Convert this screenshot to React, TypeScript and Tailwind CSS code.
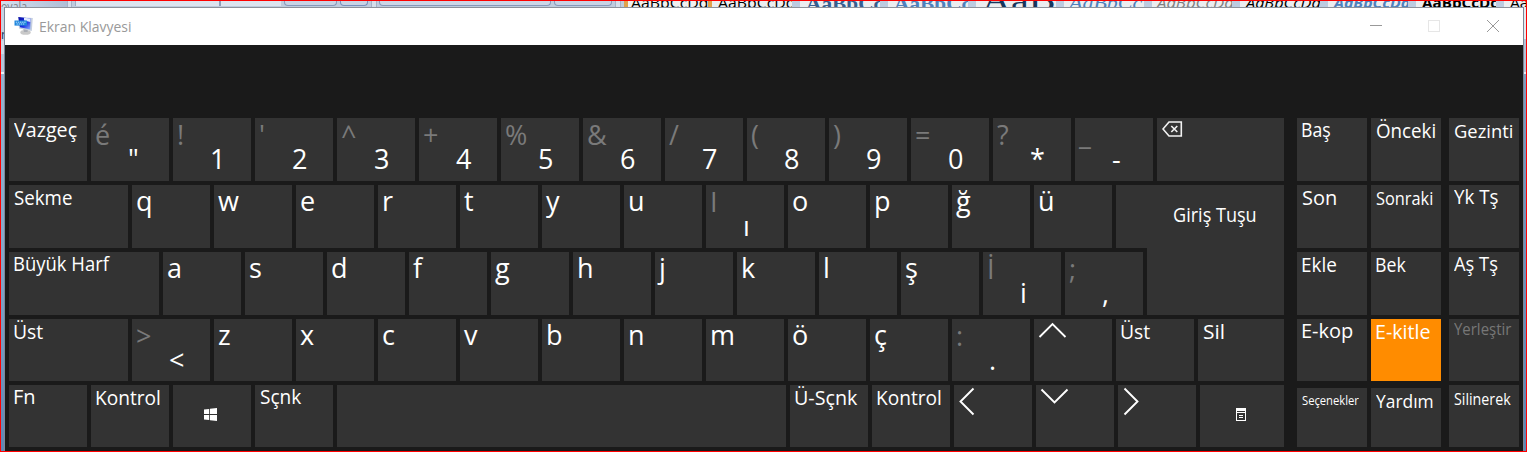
import { useLayoutEffect, useRef, useState } from "react";
import type { ReactNode } from "react";

/* Text squeezed or stretched horizontally so that it takes up a given width. */
function Fit({ text, width, className = "" }: { text: string; width: number; className?: string }) {
  const ref = useRef<HTMLSpanElement>(null);
  const [scale, setScale] = useState(1);
  useLayoutEffect(() => {
    if (ref.current) setScale(width / ref.current.offsetWidth);
  }, [text, width]);
  return (
    <span
      ref={ref}
      className={`block w-max origin-left whitespace-pre leading-none ${className}`}
      style={{ transform: `scaleX(${scale})` }}
    >
      {text}
    </span>
  );
}

function Key({ size = "w-[78px]", tone = "bg-[#333333]", children }: { size?: string; tone?: string; children?: ReactNode }) {
  return <div className={`flex shrink-0 flex-col items-start ${size} ${tone}`}>{children}</div>;
}

type LabelKeyProps = { text: string; width: number; size?: string; tone?: string; label?: string };

function LabelKey({ text, width, size, tone, label = "mt-[3px] ml-[5px] text-[20px]" }: LabelKeyProps) {
  return (
    <Key size={size} tone={tone}>
      <Fit text={text} width={width} className={label} />
    </Key>
  );
}

function LetterKey({ char }: { char: string }) {
  return (
    <Key>
      <span className="ml-[4px] mt-[2px] block text-[27px] leading-none">{char}</span>
    </Key>
  );
}

function DualKey({ shift, main }: { shift: string; main: string }) {
  return (
    <Key>
      <span className="ml-[4px] mt-[3px] block text-[27px] leading-none text-[#7a7a7a]">{shift}</span>
      <span className="-mt-[3px] ml-[37px] block text-[27px] leading-none">{main}</span>
    </Key>
  );
}

function ArrowKey({ points }: { points: string }) {
  return (
    <Key>
      <svg className="block" width="78" height="62" fill="none" stroke="#fff" strokeWidth="1.9">
        <polyline points={points} />
      </svg>
    </Key>
  );
}

function BackspaceIcon() {
  return (
    <svg className="ml-[5px] mt-[3px] block" width="21" height="17" fill="none" stroke="#f2f2f2" strokeWidth="1.6">
      <path d="M7 1H19.3V15H7L1 8Z" />
      <path d="M9.3 5L15.3 11M15.3 5L9.3 11" />
    </svg>
  );
}

function WindowsIcon() {
  return (
    <svg className="ml-[31px] mt-[23px] block" width="13" height="13" fill="#fff">
      <path d="M0 1.6L5.2 1V6H0ZM6 0.8L13 0V6H6ZM0 7H5.2V12L0 11.4ZM6 7H13V13L6 12.2Z" />
    </svg>
  );
}

function MenuIcon() {
  return (
    <svg className="ml-[36px] mt-[23px] block" width="10" height="13" fill="#fff" shapeRendering="crispEdges">
      <path fillRule="evenodd" d="M0 0H10V13H0ZM1 3V4H9V3ZM1 5V12H9V5Z" />
      <path d="M3 7H7V8H3ZM3 9H7V10H3Z" />
    </svg>
  );
}

function KeyboardAppIcon() {
  return (
    <svg className="ml-[9px] mt-[8px] block shrink-0" width="20" height="20">
      <defs>
        <linearGradient id="screen" x1="0" y1="0" x2="1" y2="1">
          <stop offset="0" stopColor="#0a0ea8" />
          <stop offset="0.55" stopColor="#1a2ee0" />
          <stop offset="1" stopColor="#8fb4ff" />
        </linearGradient>
      </defs>
      <ellipse cx="11.5" cy="16.4" rx="5.2" ry="2.4" fill="#c9c9c9" />
      <path d="M9 12L14 13.5L13.5 16H10Z" fill="#a9adb4" />
      <path d="M4 1L18.8 2L17.8 15L5 12.5Z" fill="#c5cfdf" />
      <path d="M4.3 1L16.5 2.5L16.3 13.6L6 11.2Z" fill="url(#screen)" />
      <path d="M10 1.8L16.5 2.5L16.4 6L10 4.5Z" fill="#dfe9ff" />
      <path d="M0.5 4.5H13V9.6H0.5Z" fill="#1e86dc" />
      <path d="M1.8 6.2H12M2.5 8H11" stroke="#c7e4ff" strokeWidth="0.9" strokeDasharray="1.4 0.7" />
    </svg>
  );
}

const styleSamples = [
  { text: "AaBbCcDd", width: 77, look: "-mb-[3px] ml-[3px] font-['Open_Sans'] text-[15px] text-black" },
  { text: "AaBbCcDd", width: 77, look: "-mb-[3px] ml-[6px] font-['Open_Sans'] text-[15px] text-black" },
  { text: "AaBbCcD", width: 92, look: "-mb-[6px] ml-[6px] font-['Liberation_Serif'] text-[19px] font-bold text-[#365f91]" },
  { text: "AaBbCcD", width: 92, look: "-mb-[6px] ml-[6px] font-['Liberation_Serif'] text-[19px] font-bold text-[#4f81bd]" },
  { text: "AaB", width: 73, look: "-mb-[10px] ml-[6px] font-['Liberation_Serif'] text-[34px] text-[#17365d]" },
  { text: "AaBbCcI", width: 81, look: "-mb-[5px] ml-[5px] font-['Liberation_Serif'] text-[19px] italic text-[#4f81bd]" },
  { text: "AaBbCcDd", width: 77, look: "-mb-[3px] ml-[5px] font-['Open_Sans'] text-[15px] italic text-[#808080]" },
  { text: "AaBbCcDd", width: 75, look: "-mb-[3px] ml-[6px] font-['Open_Sans'] text-[15px] italic text-black" },
  { text: "AaBbCcDd", width: 76, look: "-mb-[3px] ml-[6px] font-['Open_Sans'] text-[15px] font-bold italic text-[#4f81bd]" },
  { text: "AaBbCcDc", width: 76, look: "-mb-[3px] ml-[6px] font-['Open_Sans'] text-[15px] font-bold text-black" },
  { text: "AaBbCcDd", width: 76, look: "-mb-[3px] ml-[6px] font-['Open_Sans'] text-[15px] text-black" },
];

/* The sliver of the document window showing above the keyboard. */
function RibbonStrip() {
  return (
    <div className="flex h-[6px] shrink-0 overflow-hidden bg-[#bfcbdd]">
      <div className="flex h-[6px] w-[66px] shrink-0 items-end overflow-hidden bg-linear-to-r from-[#d3dfed] to-[#afbed6]">
        <Fit text="oyala" width={26} className="-mb-[6px] text-[13px] text-[#7f7f86]" />
      </div>
      <div className="w-[5px] shrink-0 border-x border-[#a4b1c8] bg-[#d5deea]" />
      <div className="ml-[3px] h-[5px] w-[144px] shrink-0 border-l border-[#9dabc4] bg-[#dce4ef]" />
      <div className="h-[5px] w-[62px] shrink-0 border-l-2 border-[#8f9fba] bg-[#dce4ef]" />
      <div className="ml-[3px] h-[5px] w-[53px] shrink-0 rounded-b border border-t-0 border-[#8699bb] bg-[#c8d3e4]" />
      <div className="ml-[3px] h-[5px] w-[28px] shrink-0 rounded-b border border-t-0 border-[#7890bd] bg-[#c8d3e4]" />
      <div className="ml-[3px] w-[6px] shrink-0 border-x border-[#a4b1c8] bg-[#d5deea]" />
      <div className="ml-[2px] h-[5px] w-[172px] shrink-0 rounded-b border border-t-0 border-[#8699bb] bg-[#ccd6e6]" />
      <div className="ml-[3px] h-[5px] w-[58px] shrink-0 rounded-b border border-t-0 border-[#8699bb] bg-[#c8d3e4]" />
      <div className="ml-[3px] mr-[3px] w-[6px] shrink-0 border-x border-[#a4b1c8] bg-[#d5deea]" />
      {styleSamples.map((s, i) => (
        <div
          key={i}
          className={`flex h-[6px] w-[88px] shrink-0 items-end overflow-hidden ${
            i === 0 ? "border-x-4 border-[#e0a24c] bg-[#f0f0f0]" : "border-r-8 border-[#bccbe0] bg-[#ebedf0]"
          }`}
        >
          <Fit text={s.text} width={s.width} className={s.look} />
        </div>
      ))}
    </div>
  );
}

function TitleBar() {
  return (
    <div className="flex h-[38px] shrink-0 border-t border-[#8d929b] bg-white">
      <KeyboardAppIcon />
      <Fit text="Ekran Klavyesi" width={92} className="ml-[5px] mt-[11px] text-[15px] text-[#999999]" />
      <svg className="ml-auto mr-[24px] mt-[11px] block" width="132" height="14" fill="none" stroke="#999">
        <path d="M3 6.5H15" shapeRendering="crispEdges" />
        <path d="M61.5 1.5H72.5V12.5H61.5Z" stroke="#e6e6e6" shapeRendering="crispEdges" />
        <path d="M120 1L132 13M132 1L120 13" />
      </svg>
    </div>
  );
}

const numberKeys: [string, string][] = [
  ["é", '"'], ["!", "1"], ["'", "2"], ["^", "3"], ["+", "4"], ["%", "5"], ["&", "6"],
  ["/", "7"], ["(", "8"], [")", "9"], ["=", "0"], ["?", "*"], ["_", "-"],
];

function MainKeys() {
  return (
    <div className="flex w-[1275px] flex-col gap-1">
      <div className="flex h-[63px] gap-1">
        <LabelKey text="Vazgeç" width={63} label="mt-[2px] ml-[5px] text-[20px]" />
        {numberKeys.map(([shift, main]) => (
          <DualKey key={main} shift={shift} main={main} />
        ))}
        <Key size="w-[127px]">
          <BackspaceIcon />
        </Key>
      </div>
      <div className="flex h-[63px] gap-1">
        <LabelKey text="Sekme" width={58} size="w-[119px]" />
        {["q", "w", "e", "r", "t", "y", "u"].map((c) => <LetterKey key={c} char={c} />)}
        <DualKey shift="I" main="ı" />
        {["o", "p", "ğ", "ü"].map((c) => <LetterKey key={c} char={c} />)}
        <LabelKey text="Giriş Tuşu" width={84} size="w-[168px]" label="mt-[20px] ml-[57px] text-[20px]" />
      </div>
      <div className="flex h-[63px] gap-1">
        <LabelKey text="Büyük Harf" width={96} size="w-[150px]" label="mt-[2px] ml-[4px] text-[20px]" />
        {["a", "s", "d", "f", "g", "h", "j", "k", "l", "ş"].map((c) => <LetterKey key={c} char={c} />)}
        <DualKey shift="İ" main="i" />
        <DualKey shift=";" main="," />
        <Key size="w-[137px] -mt-1" />
      </div>
      <div className="flex h-[62px] gap-1">
        <LabelKey text="Üst" width={30} size="w-[119px]" label="mt-[3px] ml-[4px] text-[20px]" />
        <DualKey shift=">" main="<" />
        {["z", "x", "c", "v", "b", "n", "m", "ö", "ç"].map((c) => <LetterKey key={c} char={c} />)}
        <DualKey shift=":" main="." />
        <ArrowKey points="5.5,18 18.5,5 31.5,18" />
        <LabelKey text="Üst" width={30} label="mt-[3px] ml-[4px] text-[20px]" />
        <LabelKey text="Sil" width={22} size="w-[86px]" />
      </div>
      <div className="flex h-[62px] gap-1">
        <LabelKey text="Fn" width={23} label="mt-[2px] ml-[4px] text-[20px]" />
        <LabelKey text="Kontrol" width={66} label="mt-[3px] ml-[4px] text-[20px]" />
        <Key>
          <WindowsIcon />
        </Key>
        <LabelKey text="Sçnk" width={41} label="mt-[2px] ml-[5px] text-[20px]" />
        <Key size="w-[449px]" />
        <LabelKey text="Ü-Sçnk" width={63} label="mt-[3px] ml-[4px] text-[20px]" />
        <LabelKey text="Kontrol" width={66} label="mt-[3px] ml-[4px] text-[20px]" />
        <ArrowKey points="19.5,3.5 6.5,16.5 19.5,29.5" />
        <ArrowKey points="5.5,4.5 18.5,17.5 31.5,4.5" />
        <ArrowKey points="6.5,3.5 19.5,16.5 6.5,29.5" />
        <Key size="w-[84px]">
          <MenuIcon />
        </Key>
      </div>
    </div>
  );
}

const sideColumns: { gap: string; keys: LabelKeyProps[] }[] = [
  {
    gap: "ml-[13px]",
    keys: [
      { text: "Baş", width: 30, size: "w-[70px] h-[63px]", label: "mt-[2px] ml-[4px] text-[20px]" },
      { text: "Son", width: 35, size: "w-[70px] h-[63px]" },
      { text: "Ekle", width: 36, size: "w-[70px] h-[63px]", label: "mt-[3px] ml-[4px] text-[20px]" },
      { text: "E-kop", width: 52, size: "w-[70px] h-[62px]", label: "mt-[2px] ml-[4px] text-[20px]" },
      { text: "Seçenekler", width: 57, size: "w-[70px] h-[59px] mt-[3px]", label: "mt-[7px] ml-[5px] text-[12px]" },
    ],
  },
  {
    gap: "ml-1",
    keys: [
      { text: "Önceki", width: 60, size: "w-[70px] h-[63px]", label: "mt-[3px] ml-[5px] text-[20px]" },
      { text: "Sonraki", width: 57, size: "w-[70px] h-[63px]", label: "mt-[5px] ml-[5px] text-[17.5px]" },
      { text: "Bek", width: 31, size: "w-[70px] h-[63px]", label: "mt-[3px] ml-[4px] text-[20px]" },
      { text: "E-kitle", width: 56, size: "w-[70px] h-[62px]", tone: "bg-[#ff8c00]", label: "mt-[3px] ml-[4px] text-[20px]" },
      { text: "Yardım", width: 58, size: "w-[70px] h-[59px] mt-[3px]", label: "mt-[4px] ml-[5px] text-[18px]" },
    ],
  },
  {
    gap: "ml-2",
    keys: [
      { text: "Gezinti", width: 59, size: "w-[70px] h-[63px]", label: "mt-[4px] ml-[5px] text-[19px]" },
      { text: "Yk Tş", width: 44, size: "w-[70px] h-[63px]", label: "mt-[2px] ml-[5px] text-[20px]" },
      { text: "Aş Tş", width: 44, size: "w-[70px] h-[63px]", label: "mt-[2px] ml-[5px] text-[20px]" },
      { text: "Yerleştir", width: 57, size: "w-[70px] h-[62px]", label: "mt-[2px] ml-[5px] text-[16px] text-[#777777]" },
      { text: "Silinerek", width: 57, size: "w-[70px] h-[62px]", label: "mt-[7px] ml-[5px] text-[15.5px]" },
    ],
  },
];

function SideKeys() {
  return (
    <>
      {sideColumns.map((col) => (
        <div key={col.gap} className={`flex flex-col gap-1 ${col.gap}`}>
          {col.keys.map((k) => (
            <LabelKey key={k.text} {...k} />
          ))}
        </div>
      ))}
    </>
  );
}

export default function App() {
  return (
    <div className="flex h-[452px] w-[1527px] flex-col overflow-hidden border border-[#ff0000] bg-[#b9c8da] font-['Open_Sans',sans-serif]">
      <RibbonStrip />
      <div className="flex h-[444px]">
        <div className="flex w-[4px] shrink-0 flex-col overflow-hidden border-r border-[#7d8796] bg-[#c5d3e3]">
          <div className="h-[22px]" />
          <div className="h-[12px] w-[4px] overflow-hidden text-[12px] leading-[12px] text-[#17365d]">n</div>
          <div className="h-[13px] bg-[#d0dae7]" />
          <div className="h-[18px] bg-[#b3c6da]" />
          <div className="h-[2px] bg-[#eef4f8]" />
          <div className="flex-1 bg-linear-to-b from-[#94b3cf] via-[#83a6c8] to-[#5f86b3]" />
        </div>
        <div className="flex w-[1518px] shrink-0 flex-col">
          <TitleBar />
          <div className="flex h-[406px] bg-[#1a1a1a] pl-[4px] pt-[73px] text-white">
            <MainKeys />
            <SideKeys />
          </div>
        </div>
        <div className="flex flex-1 flex-col border-l border-[#7d8796]">
          <div className="h-[32px] bg-[#e4e8ee]" />
          <div className="h-[33px] bg-[#b3c2d6]" />
          <div className="h-[2px] bg-[#e4edf4]" />
          <div className="flex-1 bg-linear-to-b from-[#7f9dbf] to-[#5f86b3]" />
        </div>
      </div>
    </div>
  );
}
